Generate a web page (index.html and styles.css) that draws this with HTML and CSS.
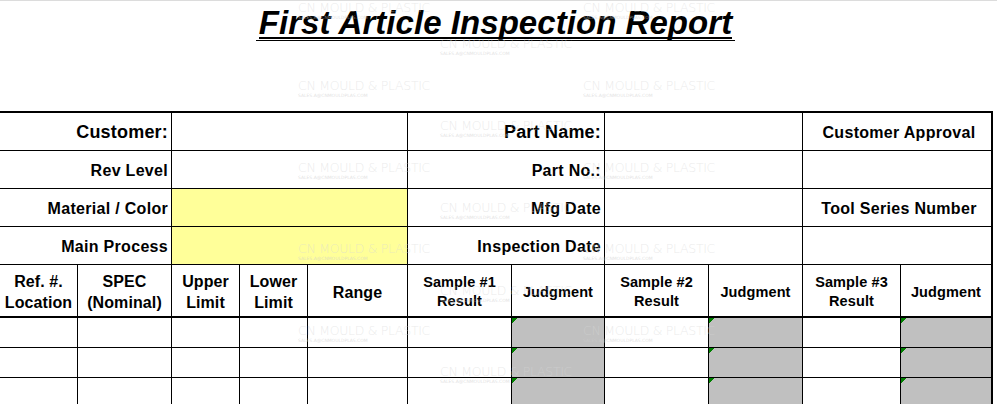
FILE: index.html
```html
<!DOCTYPE html>
<html>
<head>
<meta charset="utf-8">
<link rel="stylesheet" href="styles.css">
</head>
<body>
<div class="page">
  <header class="title-area">
    <h1 class="title"><span class="title-under"><span class="title-text">First Article Inspection Report</span></span></h1>
  </header>

  <div class="sheet">
    <div class="c lbl big s2">Customer:</div>
    <div class="c s3"></div>
    <div class="c lbl big s2">Part Name:</div>
    <div class="c s2"></div>
    <div class="c ctr s2">Customer Approval</div>

    <div class="c lbl s2">Rev Level</div>
    <div class="c s3"></div>
    <div class="c lbl s2">Part No.:</div>
    <div class="c s2"></div>
    <div class="c s2"></div>

    <div class="c lbl s2">Material / Color</div>
    <div class="c s3 yellow"></div>
    <div class="c lbl s2">Mfg Date</div>
    <div class="c s2"></div>
    <div class="c ctr s2">Tool Series Number</div>

    <div class="c lbl s2">Main Process</div>
    <div class="c s3 yellow"></div>
    <div class="c lbl s2">Inspection Date</div>
    <div class="c s2"></div>
    <div class="c s2"></div>

    <div class="c hd">Ref. #.<br>Location</div>
    <div class="c hd">SPEC<br>(Nominal)</div>
    <div class="c hd">Upper<br>Limit</div>
    <div class="c hd">Lower<br>Limit</div>
    <div class="c hd">Range</div>
    <div class="c hd sm">Sample #1<br>Result</div>
    <div class="c hd sm">Judgment</div>
    <div class="c hd sm">Sample #2<br>Result</div>
    <div class="c hd sm">Judgment</div>
    <div class="c hd sm">Sample #3<br>Result</div>
    <div class="c hd sm">Judgment</div>

    <div class="c"></div><div class="c"></div><div class="c"></div><div class="c"></div><div class="c"></div><div class="c"></div><div class="c gray"></div><div class="c"></div><div class="c gray"></div><div class="c"></div><div class="c gray"></div>
    <div class="c"></div><div class="c"></div><div class="c"></div><div class="c"></div><div class="c"></div><div class="c"></div><div class="c gray"></div><div class="c"></div><div class="c gray"></div><div class="c"></div><div class="c gray"></div>
    <div class="c"></div><div class="c"></div><div class="c"></div><div class="c"></div><div class="c"></div><div class="c"></div><div class="c gray"></div><div class="c"></div><div class="c gray"></div><div class="c"></div><div class="c gray"></div>
  </div>

  <div class="wm" style="left:298px;top:0px"><span class="wm-t">CN MOULD &amp; PLASTIC</span><span class="wm-s">SALES.A@CNMOULDPLAS.COM</span></div>
  <div class="wm" style="left:583px;top:0px"><span class="wm-t">CN MOULD &amp; PLASTIC</span><span class="wm-s">SALES.A@CNMOULDPLAS.COM</span></div>
  <div class="wm" style="left:440px;top:36px"><span class="wm-t">CN MOULD &amp; PLASTIC</span><span class="wm-s">SALES.A@CNMOULDPLAS.COM</span></div>
  <div class="wm" style="left:298px;top:78px"><span class="wm-t">CN MOULD &amp; PLASTIC</span><span class="wm-s">SALES.A@CNMOULDPLAS.COM</span></div>
  <div class="wm" style="left:583px;top:78px"><span class="wm-t">CN MOULD &amp; PLASTIC</span><span class="wm-s">SALES.A@CNMOULDPLAS.COM</span></div>
  <div class="wm" style="left:440px;top:118px"><span class="wm-t">CN MOULD &amp; PLASTIC</span><span class="wm-s">SALES.A@CNMOULDPLAS.COM</span></div>
  <div class="wm" style="left:298px;top:160px"><span class="wm-t">CN MOULD &amp; PLASTIC</span><span class="wm-s">SALES.A@CNMOULDPLAS.COM</span></div>
  <div class="wm" style="left:583px;top:160px"><span class="wm-t">CN MOULD &amp; PLASTIC</span><span class="wm-s">SALES.A@CNMOULDPLAS.COM</span></div>
  <div class="wm" style="left:440px;top:200px"><span class="wm-t">CN MOULD &amp; PLASTIC</span><span class="wm-s">SALES.A@CNMOULDPLAS.COM</span></div>
  <div class="wm" style="left:298px;top:241px"><span class="wm-t">CN MOULD &amp; PLASTIC</span><span class="wm-s">SALES.A@CNMOULDPLAS.COM</span></div>
  <div class="wm" style="left:583px;top:241px"><span class="wm-t">CN MOULD &amp; PLASTIC</span><span class="wm-s">SALES.A@CNMOULDPLAS.COM</span></div>
  <div class="wm" style="left:440px;top:283px"><span class="wm-t">CN MOULD &amp; PLASTIC</span><span class="wm-s">SALES.A@CNMOULDPLAS.COM</span></div>
  <div class="wm" style="left:298px;top:323px"><span class="wm-t">CN MOULD &amp; PLASTIC</span><span class="wm-s">SALES.A@CNMOULDPLAS.COM</span></div>
  <div class="wm" style="left:583px;top:323px"><span class="wm-t">CN MOULD &amp; PLASTIC</span><span class="wm-s">SALES.A@CNMOULDPLAS.COM</span></div>
  <div class="wm" style="left:440px;top:364px"><span class="wm-t">CN MOULD &amp; PLASTIC</span><span class="wm-s">SALES.A@CNMOULDPLAS.COM</span></div>
</div>
</body>
</html>
```
FILE: styles.css
```css
html, body {
  margin: 0;
  padding: 0;
  background: #ffffff;
}

body {
  font-family: "Liberation Sans", Arial, sans-serif;
  color: #000;
  overflow: hidden;
}

.page {
  position: relative;
  width: 997px;
  height: 404px;
  border-top: 1px solid #dcdcdc;
  box-sizing: border-box;
}

.title-area {
  height: 110px;
  display: flex;
  justify-content: center;
  align-items: flex-start;
}

.title {
  margin: 7px 0 0 -6px;
  font-size: 33px;
  font-weight: bold;
  font-style: italic;
  line-height: 29px;
  letter-spacing: 0.05px;
}

.title-under {
  display: inline-block;
  padding: 0 3px 1px 3px;
  border-bottom: 1px solid #000;
}

.title-text {
  display: block;
  border-bottom: 2px solid #000;
}

.sheet {
  display: grid;
  grid-template-columns: 77px 93px 67px 67px 99px 103px 92px 103px 93px 97px 90px;
  grid-template-rows: 37px 37px 37px 37px 52px 29px 29px 29px;
  gap: 1px;
  width: max-content;
  background: #000;
  border-top: 2px solid #000;
  border-right: 2px solid #000;
}

.c {
  background: #fff;
  display: flex;
  align-items: center;
  font-weight: bold;
  font-size: 16px;
  letter-spacing: 0.3px;
  min-width: 0;
}

.s2 { grid-column: span 2; }
.s3 { grid-column: span 3; }

.lbl {
  justify-content: flex-end;
  padding-right: 3px;
  padding-top: 2px;
}

.big {
  font-size: 18px;
  letter-spacing: 0.2px;
}

.ctr {
  justify-content: center;
  padding-top: 2px;
  padding-left: 4px;
}

.yellow {
  background: #ffff99;
}

.hd {
  justify-content: center;
  text-align: center;
  line-height: 21px;
  padding-top: 3px;
  letter-spacing: 0.1px;
  border-bottom: 1px solid #000;
}

.hd.sm {
  font-size: 14.5px;
  line-height: 19px;
}

.gray {
  background-color: #c0c0c0;
  background-image: linear-gradient(135deg, #008000 0 3.6px, transparent 3.6px);
  background-size: 6px 6px;
  background-repeat: no-repeat;
  background-position: 0 0;
}

.wm {
  position: absolute;
  pointer-events: none;
  display: flex;
  flex-direction: column;
  color: rgba(215, 215, 215, 0.5);
  font-family: "DejaVu Sans", sans-serif;
  white-space: nowrap;
}

.wm-t {
  font-size: 12.5px;
  font-weight: 300;
  letter-spacing: -0.3px;
  line-height: 14px;
}

.wm-s {
  font-size: 4.5px;
  line-height: 6px;
  color: rgba(205, 205, 205, 0.6);
}
```
